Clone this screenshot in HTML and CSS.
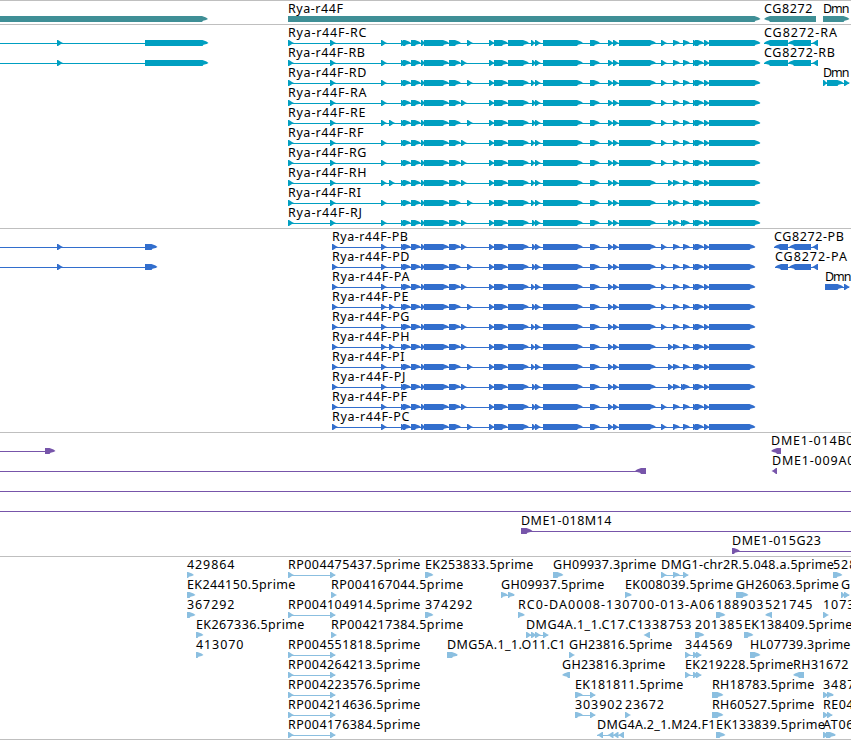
FILE: index.html
```html
<!DOCTYPE html>
<html lang="en">
  <head>
    <meta charset="UTF-8" />
    <meta name="viewport" content="width=device-width, initial-scale=1.0" />
    <title>Rya-r44F region</title>
    <link rel="stylesheet" href="styles.css">
  </head>
  <body>
    <main class="browser">
      <section class="track gene" id="genes"></section>
      <section class="track transcript" id="transcripts"></section>
      <section class="track protein" id="proteins"></section>
      <section class="track bac" id="bacs"></section>
      <section class="track est" id="ests"></section>
    </main>
    <script src="tracks.js"></script>
  </body>
</html>
```
FILE: styles.css
```css
* {
  margin: 0;
  padding: 0;
  box-sizing: border-box;
}

body {
  background: #fff;
  overflow: hidden;
}

.browser {
  display: flex;
  flex-direction: column;
  width: 851px;
}

.track {
  border-top: 1px solid #bfbfbf;
  padding-bottom: 3px;
}

.track:last-child {
  border-bottom: 1px solid #bfbfbf;
  padding-bottom: 2px;
}

.row {
  display: block;
  width: 851px;
  height: 20px;
  overflow: visible;
}

.label {
  font-family: "Noto Sans", "DejaVu Sans", sans-serif;
  font-size: 12.5px;
  letter-spacing: 0.6px;
  fill: #000;
}

.gene {
  color: #3f8f96;
}

.transcript {
  color: #009fc1;
}

.protein {
  color: #326ecd;
}

.bac {
  color: #7755aa;
}

.est {
  color: #8bbfe0;
}

.exon,
.intron {
  fill: currentColor;
}
```
FILE: tracks.js
```js
const SVG = "http://www.w3.org/2000/svg";

// feature: [label, label x, label end (0 = natural width), exons, options]
// exons: [start, end], strand -1 points left, line is the intron line
function add(parent, tag, attrs) {
  const el = document.createElementNS(SVG, tag);
  for (const key in attrs) el.setAttribute(key, attrs[key]);
  parent.appendChild(el);
  return el;
}

function exonPath(start, end, strand) {
  const tip = strand < 0 ? start : end;
  const base = strand < 0 ? end : start;
  const s = strand < 0 ? -1 : 1;
  if (end - start < 7) {
    return `M${base} 15H${base + s}L${tip - s * 2} 17L${tip} 18L${tip - s * 2} 19L${base + s} 21H${base}Z`;
  }
  return `M${base} 15H${tip - s * 6}L${tip - s * 2} 16.6L${tip} 18L${tip - s * 2} 19L${tip - s * 5} 19.8L${tip - s * 6} 21H${base}Z`;
}

function drawRow(track, features) {
  const row = add(track, "svg", { class: "row" });
  features.forEach(([name, x, end, exons, opts = {}]) => {
    const line = opts.line || (exons.length ? [exons[0][0], exons[exons.length - 1][1] - 1] : null);
    if (line && (opts.line || exons.length > 1)) {
      add(row, "rect", { class: "intron", x: line[0], y: 18, width: line[1] - line[0], height: 1 });
    }
    exons.forEach(([a, b]) => {
      add(row, "path", { class: "exon", d: exonPath(a, b, opts.strand) });
    });
    if (name) {
      const text = add(row, "text", { class: "label", x: x, y: 12 });
      if (end) text.setAttribute("textLength", end - x);
      text.textContent = name;
    }
  });
}

function drawTrack(id, rows) {
  rows.forEach((features) => drawRow(document.getElementById(id), features));
}

// exons shared by every Rya-r44F isoform, the rest depends on the splice form
function rya(first, last, form) {
  return [
    ...first,
    [381, 387],
    ...(form.extra ? [[389, 395]] : []),
    [401, 406], [403, 411], [411, 421], [421, 426], [424, 449], [449, 461],
    form.a === 467 ? [467, 473] : [461, 467],
    [489, 495], [494, 508], [508, 529],
    [form.b, form.b + 5], [535, 541], [543, 583], [590, 600],
    [608, 614], [613, 619], [619, 656],
    form.late ? [668, 674] : [661, 667],
    [673, 680],
    ...(form.j ? [[681, 686]] : []),
    [683, 690], [693, 698], [695, 704], [704, 710], [709, last],
  ];
}

const forms = {
  A: { a: 461, b: 532 },
  B: { a: 461, b: 532 },
  C: { a: 467, b: 531 },
  D: { a: 467, b: 531 },
  E: { a: 467, b: 532, extra: true },
  F: { a: 461, b: 531 },
  G: { a: 461, b: 531 },
  H: { a: 461, b: 531, extra: true, late: true },
  I: { a: 467, b: 531, late: true },
  J: { a: 461, b: 532, late: true, j: true },
};

const proteinForms = {
  ...forms,
  A: { a: 461, b: 531 },
  D: { a: 467, b: 532 },
  F: { a: 461, b: 532 },
  C: { a: 467, b: 532 },
};

drawTrack("genes", [[
  ["", 0, 0, [[-10, 208]]],
  ["Rya-r44F", 288, 343.5, [[288, 760.5]]],
  ["CG8272", 764, 813, [[764, 816]], { strand: -1 }],
  ["Dmn", 823, 850, [[823, 849.5]]],
]]);

const transcripts = [..."CBDAEFGHIJ"].map((k) => [
  ["Rya-r44F-R" + k, 288, { I: 361.5, J: 362.5, F: 364, B: 365.5, E: 366 }[k] || 367, rya([[288, 294], [330, 336]], 760.5, forms[k])],
]);
transcripts.slice(0, 2).forEach((row, i) => {
  row.push(["", 0, 0, [[57, 63], [145, 208.5]], { line: [0, 207] }]);
  row.push(["CG8272-R" + "AB"[i], 764, i ? 835.5 : 837.5, [[764, 788], [788, 811], [812, 818]], { strand: -1 }]);
});
transcripts[2].push(["Dmn", 823, 850, [[823, 828], [827, 843.5], [844, 850]]]);
drawTrack("transcripts", transcripts);

const proteins = [..."BDAEGHIJFC"].map((k) => [
  ["Rya-r44F-P" + k, 332, { I: 405, J: 406, F: 407.5, B: 408.5, E: 409 }[k] || 410, rya([[332, 338]], 755.5, proteinForms[k])],
]);
proteins.slice(0, 2).forEach((row, i) => {
  row.push(["", 0, 0, [[57, 63], [145, 157.5]], { line: [0, 156] }]);
  row.push(["CG8272-P" + "BA"[i], 774 + i, i ? 847.5 : 844.5, [[774 + i, 788], [789, 811], [812, 818]], { strand: -1 }]);
});
proteins[2].push(["Dmn", 825, 852, [[825, 830], [826, 843.5], [844, 850]]]);
drawTrack("proteins", proteins);

drawTrack("bacs", [
  [["", 0, 0, [[45, 55.5]], { line: [0, 46] }],
   ["DME1-014B03", 771, 862, [[771, 781]], { strand: -1 }]],
  [["", 0, 0, [[635, 646]], { strand: -1, line: [0, 640] }],
   ["DME1-009A01", 772, 863, [[771.5, 777]], { strand: -1 }]],
  [["", 0, 0, [], { line: [0, 851] }]],
  [["", 0, 0, [], { line: [0, 851] }]],
  [["DME1-018M14", 521, 612, [[521, 532.5]], { line: [525, 851] }]],
  [["DME1-015G23", 732, 821.5, [[732, 740]], { line: [735, 851] }]],
]);

function rp(id) {
  return ["RP004" + id + ".5prime", 288, 421, [[288, 294], [330, 336]]];
}

const left = { strand: -1 };

drawTrack("ests", [
  [
    ["429864", 187, 235, [[187, 194]]],
    rp("475437"),
    ["EK253833.5prime", 425, 534, [[425, 433.5]]],
    ["GH09937.3prime", 553, 657, [[553, 563.5]]],
    ["DMG1-chr2R.5.048.a.5prime", 661, 834.5, [[661, 667], [673, 680], [683, 689]]],
    ["528", 833, 857, [[833, 842.5]]],
  ],
  [
    ["EK244150.5prime", 187, 296, [[187, 195.5]]],
    ["RP004167044.5prime", 331, 464, [[331, 337]]],
    ["GH09937.5prime", 501, 605, [[501, 508], [508, 515]]],
    ["EK008039.5prime", 625, 734, [[625, 632]]],
    ["GH26063.5prime", 736, 839.5, [[736, 748.5]]],
    ["G", 841, 0, [[841, 846], [844, 850]]],
  ],
  [
    ["367292", 187, 235, [[187, 195.5]]],
    rp("104914"),
    ["374292", 425, 473, [[425, 433.5]]],
    ["RC0-DA0008-130700-013-A06", 518, 715, [[518, 525]]],
    ["188903", 716, 764, [[716, 725.5]]],
    ["521745", 765, 813, [[765, 772]], left],
    ["1073", 823, 855, [[823, 829]]],
  ],
  [
    ["EK267336.5prime", 196, 305, [[196, 203.5]]],
    ["RP004217384.5prime", 331, 464, [[331, 337]]],
    ["DMG4A.1_1.C17.C1", 526, 644.5, [[526, 532], [531, 537], [535, 541], [543, 549]]],
    ["338753", 644, 692, [[643.5, 650]], left],
    ["201385", 695, 743, [[695, 704.5]]],
    ["EK138409.5prime", 744, 853, [[744, 753.5]]],
  ],
  [
    ["413070", 196, 244, [[196, 203.5]]],
    rp("551818"),
    ["DMG5A.1_1.O11.C1", 447, 566, [[447, 452], [448, 458]]],
    ["GH23816.5prime", 569, 673, [[569, 575]]],
    ["344569", 685, 733, [[685, 691], [693, 699], [696, 702]]],
    ["HL07739.3prime", 750, 851, [[750, 760.5]]],
  ],
  [
    rp("264213"),
    ["GH23816.3prime", 562, 666, [[562, 570]], left],
    ["EK219228.5prime", 685, 794, [[685, 691], [693, 699], [696, 702]]],
    ["RH31672", 793, 849, [[793, 804]], left],
  ],
  [
    rp("223576"),
    ["EK181811.5prime", 575, 684, [[575, 583], [590, 596]]],
    ["RH18783.5prime", 712, 815, [[712, 723.5]]],
    ["3487", 823, 855, [[823, 829], [827, 834]]],
  ],
  [
    rp("214636"),
    ["303902", 575, 623, [[575, 583], [590, 596]]],
    ["23672", 625, 664.5, [[625, 631]]],
    ["RH60527.5prime", 712, 815, [[712, 723.5]]],
    ["RE04", 823, 854, [[823, 829], [827, 833]]],
  ],
  [
    rp("176384"),
    ["DMG4A.2_1.M24.F1", 597, 716, [[597, 603], [607.5, 613.5], [612.5, 618.5], [618, 624]], left],
    ["EK133839.5prime", 716, 825.5, [[716, 725.5]]],
    ["AT06", 823, 854, [[823, 829], [826, 836]]],
  ],
]);
```
